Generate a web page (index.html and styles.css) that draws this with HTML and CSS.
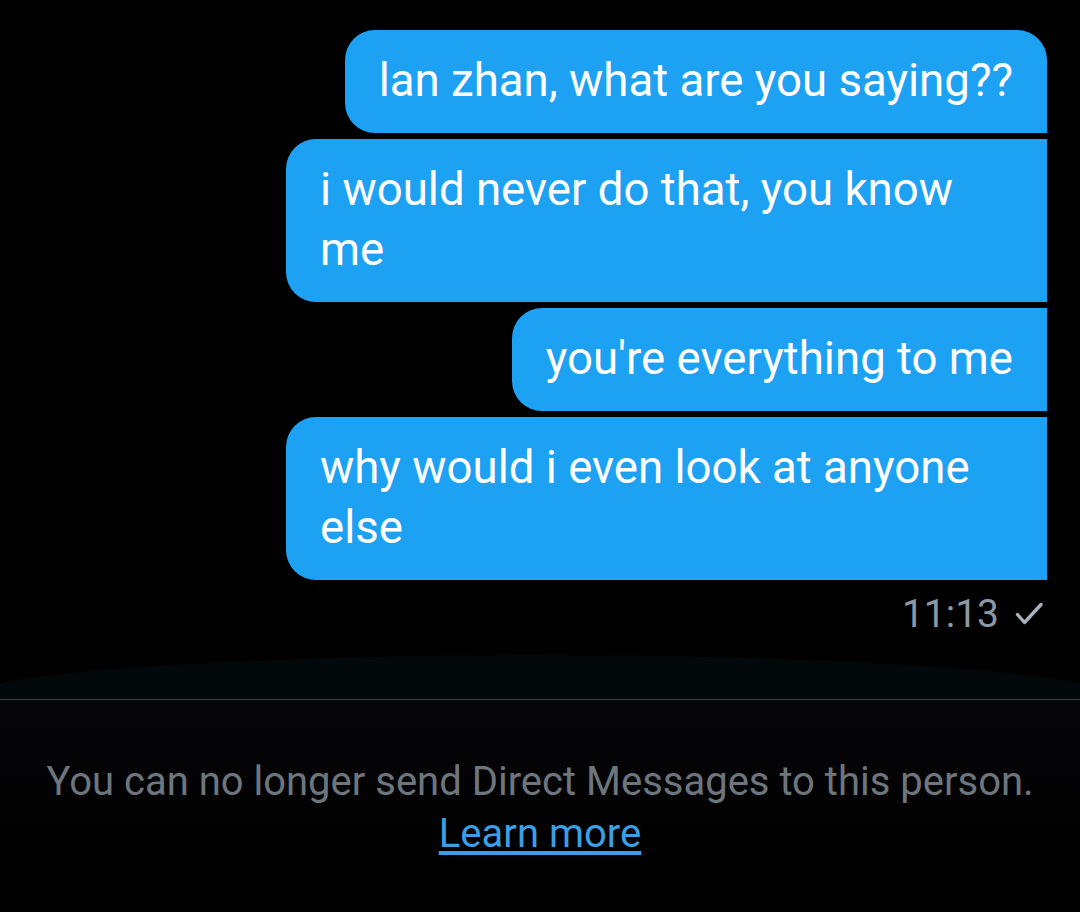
FILE: index.html
```html
<!DOCTYPE html>
<html lang="en">
<head>
<meta charset="utf-8">
<title>Direct Messages</title>
<link rel="stylesheet" href="styles.css">
</head>
<body>
<main class="conversation">
  <section class="thread">
    <div class="bubble first">lan zhan, what are you saying??</div>
    <div class="bubble">i would never do that, you know me</div>
    <div class="bubble">you're everything to me</div>
    <div class="bubble">why would i even look at anyone else</div>
    <div class="meta">
      <span class="time">11:13</span>
      <svg class="check" viewBox="0 0 28 24" width="28" height="24" aria-hidden="true">
        <path d="M2.5 12.5 L9.5 20.5 L26 2.5" fill="none" stroke="currentColor" stroke-width="3.4" stroke-linecap="round" stroke-linejoin="round"/>
      </svg>
    </div>
  </section>
  <div class="fade"><div class="fade-arc"></div></div>
  <footer class="notice">
    <p class="notice-text">You can no longer send Direct Messages to this person.</p>
    <a class="notice-link" href="#">Learn more</a>
  </footer>
</main>
</body>
</html>
```

FILE: styles.css
```css
html, body {
  margin: 0;
  padding: 0;
  background: #000;
  height: 100%;
}

body {
  font-family: Roboto, "Noto Sans", "Liberation Sans", sans-serif;
  -webkit-font-smoothing: antialiased;
}

.conversation {
  display: flex;
  flex-direction: column;
  min-height: 100%;
}

.thread {
  display: flex;
  flex-direction: column;
  align-items: flex-end;
  gap: 6.5px;
  padding: 30px 33px 0 0;
}

.bubble {
  box-sizing: border-box;
  max-width: 761px;
  padding: 21px 34px 21.5px;
  background: #1da1f2;
  color: #fff;
  font-size: 45.6px;
  line-height: 60px;
  border-radius: 30px 0 0 30px;
}

.bubble.first {
  border-radius: 30px 30px 0 30px;
}

.meta {
  display: flex;
  align-items: center;
  gap: 16px;
  margin-top: 3px;
  padding-right: 4px;
  color: #8b98a5;
}

.time {
  font-size: 39px;
  line-height: 50px;
}

.check {
  display: block;
  color: #a9b2bb;
}

.fade {
  height: 44px;
  margin-top: 16px;
  overflow: hidden;
  border-bottom: 1px solid #3a3e41;
}

.fade-arc {
  width: 1160px;
  height: 88px;
  margin-left: -40px;
  border-radius: 50%;
  background: #03080a;
}

.notice {
  flex: 1;
  background: linear-gradient(#060609, #000 80%);
  text-align: center;
  padding-top: 56px;
}

.notice-text {
  margin: 0;
  color: #6e767d;
  font-size: 40px;
  line-height: 52px;
}

.notice-link {
  display: inline-block;
  color: #3b9fe6;
  font-size: 40px;
  line-height: 52px;
  text-decoration: underline;
  text-underline-offset: 4px;
}
```
